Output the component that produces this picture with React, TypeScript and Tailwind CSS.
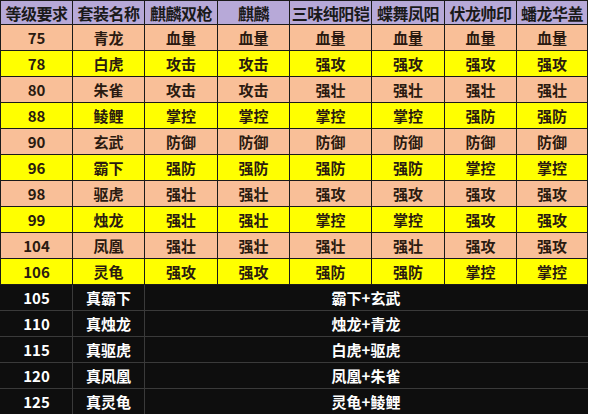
const headers = ['等级要求', '套装名称', '麒麟双枪', '麒麟', '三味纯阳铠', '蝶舞凤阳', '伏龙帅印', '蟠龙华盖'];

const colWidths = [72, 72, 73, 72, 82, 73, 72, 71];

const rows = [
  ['75', '青龙', '血量', '血量', '血量', '血量', '血量', '血量'],
  ['78', '白虎', '攻击', '攻击', '强攻', '强攻', '强攻', '强攻'],
  ['80', '朱雀', '攻击', '攻击', '强壮', '强壮', '强壮', '强壮'],
  ['88', '鲮鲤', '掌控', '掌控', '掌控', '掌控', '强防', '强防'],
  ['90', '玄武', '防御', '防御', '防御', '防御', '防御', '防御'],
  ['96', '霸下', '强防', '强防', '强防', '强防', '掌控', '掌控'],
  ['98', '驱虎', '强壮', '强壮', '强攻', '强攻', '强攻', '强攻'],
  ['99', '烛龙', '强壮', '强壮', '掌控', '掌控', '强攻', '强攻'],
  ['104', '凤凰', '强壮', '强壮', '强壮', '强壮', '强攻', '强攻'],
  ['106', '灵龟', '强攻', '强攻', '强防', '强防', '掌控', '掌控'],
];

const combos = [
  ['105', '真霸下', '霸下+玄武'],
  ['110', '真烛龙', '烛龙+青龙'],
  ['115', '真驱虎', '白虎+驱虎'],
  ['120', '真凤凰', '凤凰+朱雀'],
  ['125', '真灵龟', '灵龟+鲮鲤'],
];

export default function App() {
  return (
    <div
      className="w-[589px] h-[414px] overflow-hidden bg-white"
      style={{ fontFamily: '"Noto Sans CJK SC", "Liberation Sans", sans-serif' }}
    >
      <table className="table-fixed border-collapse w-[588px]">
        <colgroup>
          {colWidths.map((w, i) => (
            <col key={i} style={{ width: w }} />
          ))}
        </colgroup>
        <thead>
          <tr className="h-[24px] bg-[#b7a9d8]">
            {headers.map((h) => (
              <th
                key={h}
                className="border border-[#1a1a1a] p-0 text-[16px] leading-[22px] font-bold text-[#1a1a1a] text-center whitespace-nowrap tracking-[-0.5px]"
              >
                {h}
              </th>
            ))}
          </tr>
        </thead>
        <tbody>
          {rows.map((r, i) => (
            <tr key={r[0]} className={`h-[26px] ${i % 2 === 0 ? 'bg-[#f9bf98]' : 'bg-[#ffff00]'}`}>
              {r.map((c, j) => (
                <td
                  key={j}
                  className="border border-[#1a1a1a] p-0 text-[15px] leading-[24px] font-bold text-[#2a1a10] text-center"
                >
                  {c}
                </td>
              ))}
            </tr>
          ))}
          {combos.map((r) => (
            <tr key={r[0]} className="h-[26px] bg-[#0e0e0e]">
              <td className="border border-[#3a3a3a] border-l-[#0e0e0e] p-0 text-[15px] leading-[24px] font-bold text-white text-center">
                {r[0]}
              </td>
              <td className="border border-[#3a3a3a] p-0 text-[15px] leading-[24px] font-bold text-white text-center">
                {r[1]}
              </td>
              <td
                colSpan={6}
                className="border border-[#3a3a3a] border-r-[#0e0e0e] p-0 text-[15px] leading-[24px] font-bold text-white text-center"
              >
                {r[2]}
              </td>
            </tr>
          ))}
        </tbody>
      </table>
    </div>
  );
}
